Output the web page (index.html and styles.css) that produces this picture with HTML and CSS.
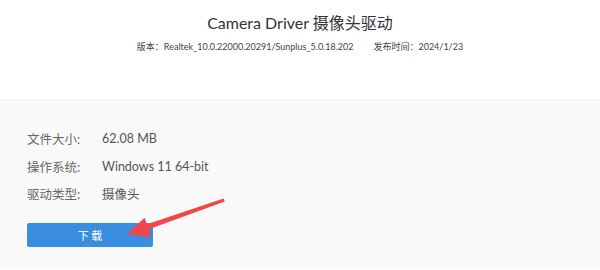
FILE: index.html
```html
<!DOCTYPE html>
<html lang="zh-CN">
<head>
<meta charset="utf-8">
<title>Camera Driver</title>
<link rel="stylesheet" href="styles.css">
</head>
<body>
<header class="head">
  <h1 class="title">Camera Driver 摄像头驱动</h1>
  <div class="meta">
    <span>版本：Realtek_10.0.22000.20291/Sunplus_5.0.18.202</span>
    <span>发布时间：2024/1/23</span>
  </div>
</header>
<main class="info">
  <div class="row"><span class="label">文件大小:</span><span class="value">62.08 MB</span></div>
  <div class="row"><span class="label">操作系统:</span><span class="value">Windows 11 64-bit</span></div>
  <div class="row"><span class="label">驱动类型:</span><span class="value">摄像头</span></div>
  <button class="dl">下 载</button>
</main>
<svg class="arrow" width="600" height="270" viewBox="0 0 600 270">
  <polygon fill="#f2474a" points="223.5,198.4 147,224.3 144.6,217.8 127,234 151,237.5 148.8,229.2 224.8,201.6"/>
</svg>
</body>
</html>
```
FILE: styles.css
```css
html, body {
  margin: 0;
  padding: 0;
  background: #fff;
  font-family: Lato, "Noto Sans CJK SC", sans-serif;
  overflow: hidden;
}
body {
  position: relative;
  width: 600px;
  height: 270px;
}
.head {
  height: 100px;
  box-sizing: border-box;
  padding-top: 11px;
  text-align: center;
  border-bottom: 1px solid #f3f3f3;
}
.title {
  margin: 0;
  font-size: 16px;
  font-weight: 400;
  color: #333;
  line-height: 24px;
}
.meta {
  margin-top: 5px;
  font-size: 9px;
  color: #444;
  line-height: 14px;
  display: flex;
  justify-content: center;
  gap: 20px;
}
.info {
  background: #f9f9f9;
  height: 169px;
  box-sizing: border-box;
  padding: 25px 0 0 27px;
}
.row {
  display: flex;
  height: 27.5px;
  align-items: center;
  font-size: 12.5px;
  color: #666;
}
.label {
  width: 75px;
}
.value {
  color: #555;
}
.dl {
  display: block;
  margin-top: 15px;
  width: 126px;
  height: 24px;
  border: 0;
  border-radius: 2px;
  background: #3a8ee0;
  color: #fff;
  font-family: "Noto Sans CJK SC", sans-serif;
  font-size: 11px;
  padding: 0;
}
.arrow {
  position: absolute;
  left: 0;
  top: 0;
  pointer-events: none;
}
```
